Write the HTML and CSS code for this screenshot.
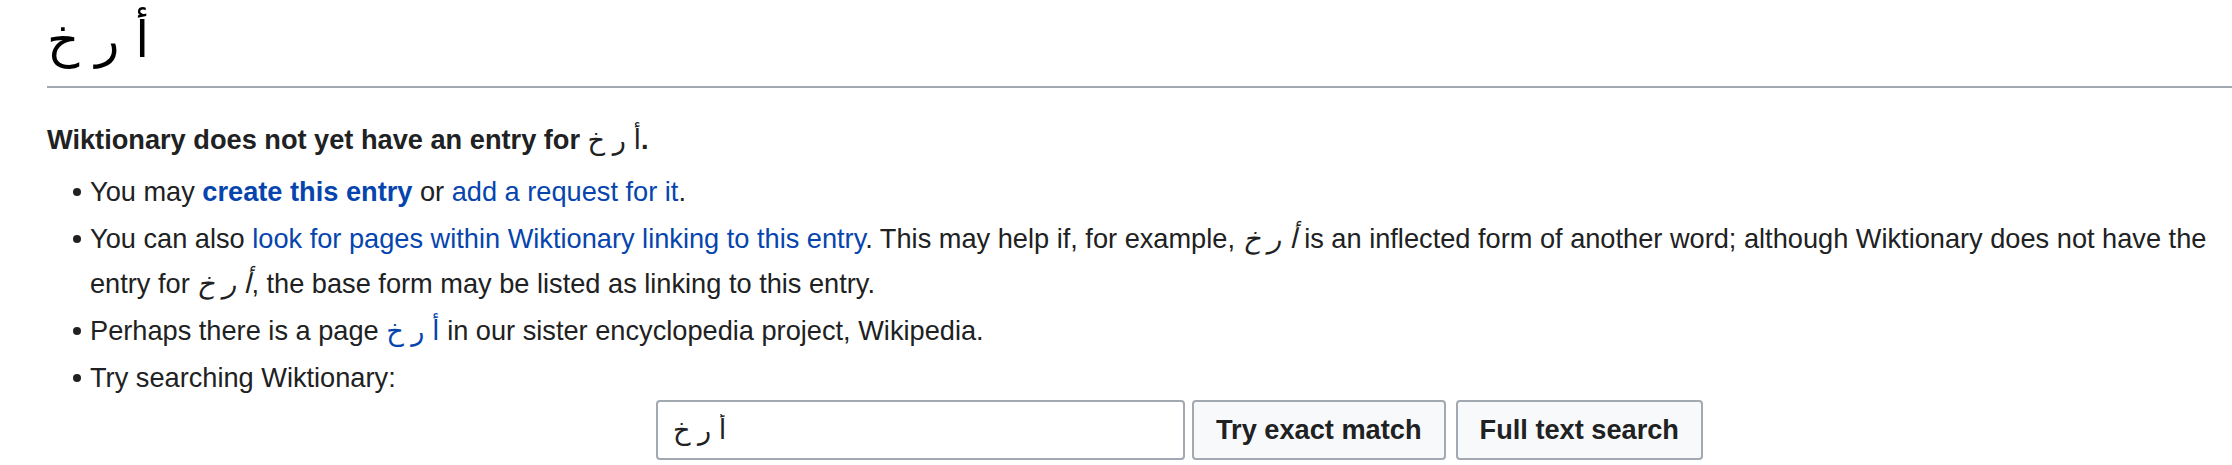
FILE: index.html
```html
<!DOCTYPE html>
<html lang="en">
<head>
<meta charset="utf-8">
<title>أ ر خ - Wiktionary</title>
<link rel="stylesheet" href="styles.css">
</head>
<body>
<div class="page">
  <h1 class="title">أ ر خ</h1>
  <div class="content">
    <p class="lead"><b>Wiktionary does not yet have an entry for <span class="ar" lang="ar">أ ر خ</span>.</b></p>
    <ul class="tips">
      <li>You may <a class="link strong" href="#">create this entry</a> or <a class="link" href="#">add a request for it</a>.</li>
      <li>You can also <a class="link" href="#">look for pages within Wiktionary linking to this entry</a>. This may help if, for example, <i class="term">أ ر خ</i> is an inflected form of another word; although Wiktionary does not have the entry for <i class="term">أ ر خ</i>, the base form may be listed as linking to this entry.</li>
      <li>Perhaps there is a page <a class="link" href="#">أ ر خ</a> in our sister encyclopedia project, Wikipedia.</li>
      <li>Try searching Wiktionary:
        <form class="search">
          <input class="search-input" type="text" value="أ ر خ">
          <button class="btn btn-first" type="button">Try exact match</button>
          <button class="btn" type="button">Full text search</button>
        </form>
      </li>
    </ul>
  </div>
</div>
</body>
</html>
```
FILE: styles.css
```css
html {
  overflow: hidden;
  background: #ffffff;
}

body {
  margin: 0;
  background: #ffffff;
  color: #202122;
  font-family: "Liberation Sans", Arial, "DejaVu Sans", sans-serif;
}

.page {
  width: 2215px;
  padding-left: 47px;
}

.title {
  margin: 0;
  padding: 15px 0 21px;
  font-family: "DejaVu Sans", sans-serif;
  font-size: 50px;
  font-weight: normal;
  line-height: 1;
  color: #000000;
  border-bottom: 2px solid #a2a9b1;
}

.content {
  font-size: 27.2px;
  line-height: 45px;
}

.lead {
  margin: 30px 0 0;
  line-height: 44px;
}

.ar {
  font-weight: normal;
}

.tips {
  list-style: none;
  margin: 7px 0 0 43px;
  padding: 0;
}

.tips li {
  margin-bottom: 2px;
}

.tips li::before {
  content: "";
  display: inline-block;
  width: 8px;
  height: 8px;
  border-radius: 50%;
  background: #202122;
  margin-left: -17px;
  margin-right: 9px;
  vertical-align: 0.2em;
}

.link {
  color: #0645ad;
  text-decoration: none;
}

.strong {
  font-weight: bold;
}

.term {
  font-style: italic;
}

.search {
  display: flex;
  justify-content: center;
  align-items: stretch;
  margin: 0;
  padding-left: 7px;
}

.search-input {
  box-sizing: border-box;
  width: 529px;
  height: 60px;
  margin: 0 7px 0 0;
  padding: 0 15px;
  border: 2px solid #a2a9b1;
  border-radius: 4px;
  background: #ffffff;
  color: #202122;
  font-family: "Liberation Sans", Arial, "DejaVu Sans", sans-serif;
  font-size: 27.2px;
}

.btn {
  box-sizing: border-box;
  height: 60px;
  margin: 0;
  padding: 0 22px;
  border: 2px solid #a2a9b1;
  border-radius: 4px;
  background: #f8f9fa;
  color: #202122;
  font-family: "Liberation Sans", Arial, sans-serif;
  font-size: 27.2px;
  font-weight: bold;
}

.btn-first {
  margin-right: 10px;
}
```
